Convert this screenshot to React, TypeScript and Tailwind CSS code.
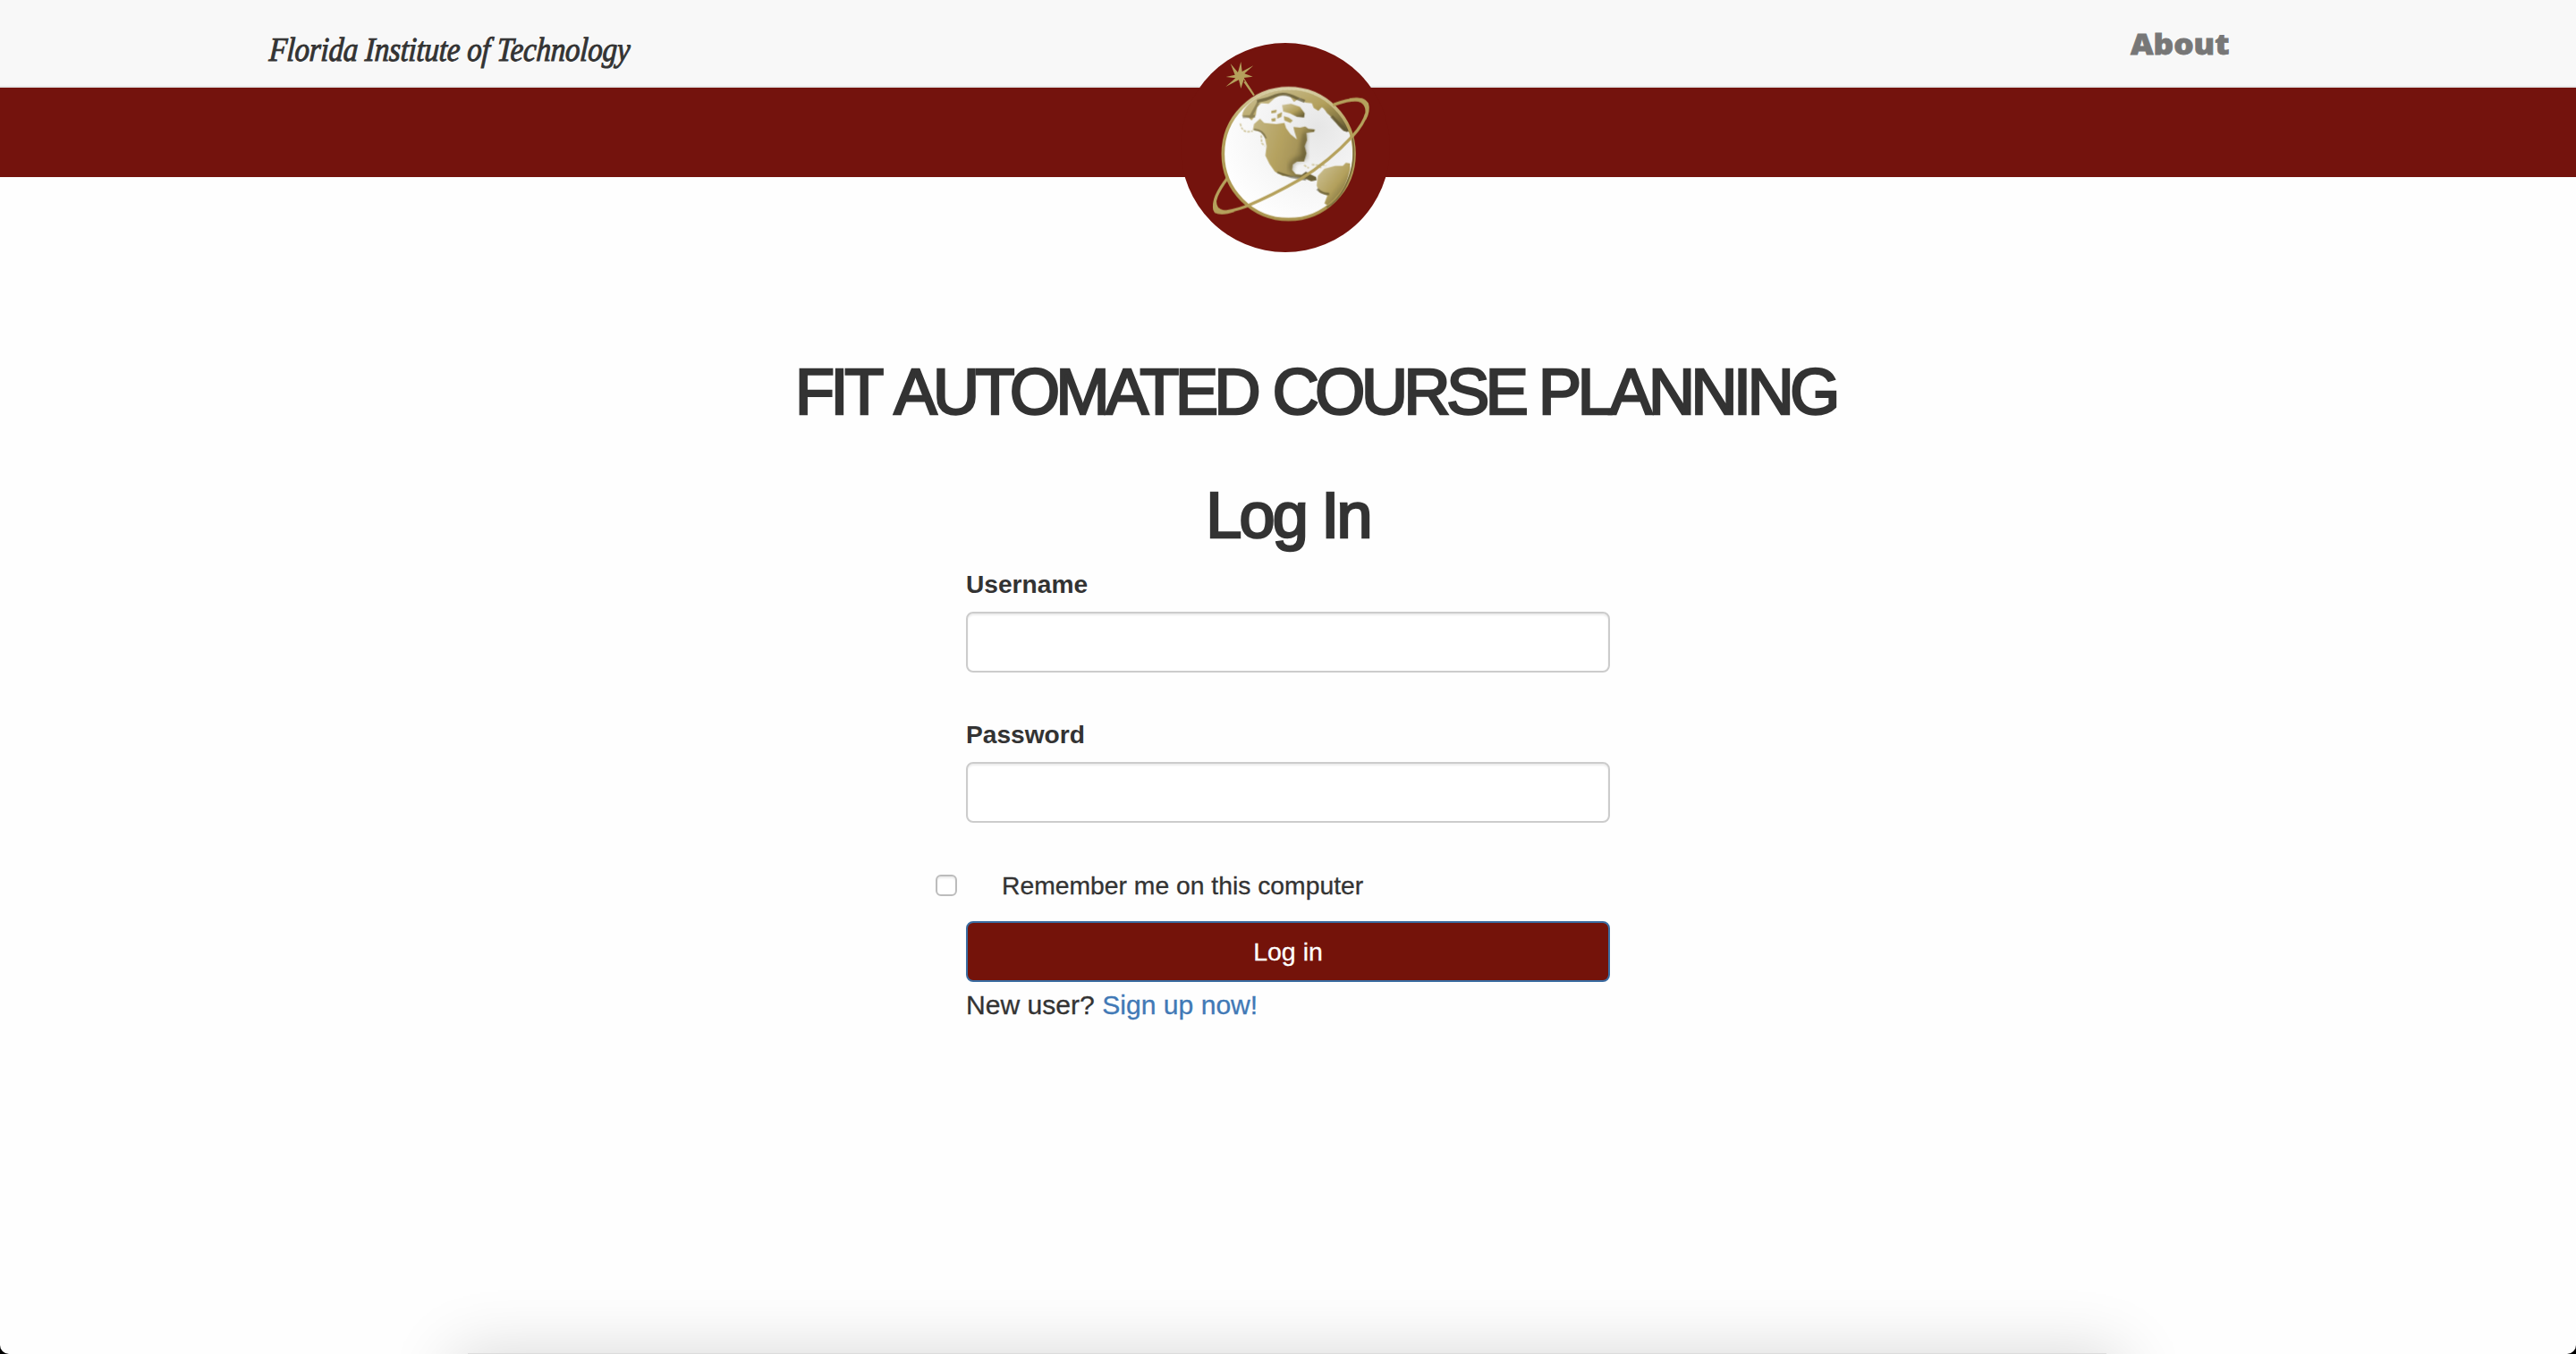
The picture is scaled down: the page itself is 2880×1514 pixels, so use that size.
function GlobeLogo() {
  return (
    <svg viewBox="0 0 780 780" className="block h-[260px] w-[260px]" aria-hidden="true">
      <defs>
        <radialGradient id="sea" cx="0.72" cy="0.3" r="0.8">
          <stop offset="0" stopColor="#e6e6e6" />
          <stop offset="0.45" stopColor="#f3f3f3" />
          <stop offset="1" stopColor="#ffffff" />
        </radialGradient>
        <linearGradient id="rim" x1="0" y1="0" x2="0" y2="1">
          <stop offset="0" stopColor="#d8cfa6" />
          <stop offset="0.3" stopColor="#b5a15c" />
          <stop offset="1" stopColor="#ab9650" />
        </linearGradient>
        <linearGradient id="landA" x1="0" y1="0" x2="1" y2="0.3">
          <stop offset="0" stopColor="#c3b684" />
          <stop offset="0.5" stopColor="#b5a260" />
          <stop offset="0.75" stopColor="#a8965a" />
          <stop offset="1" stopColor="#6b6138" />
        </linearGradient>
        <linearGradient id="landB" x1="0" y1="0" x2="1" y2="1">
          <stop offset="0" stopColor="#cfc59c" />
          <stop offset="0.55" stopColor="#b3a05c" />
          <stop offset="1" stopColor="#5b522e" />
        </linearGradient>
        <clipPath id="disc">
          <circle cx="392" cy="426" r="218" />
        </clipPath>
        <filter id="soft" x="-5%" y="-5%" width="110%" height="110%">
          <feGaussianBlur stdDeviation="2" />
        </filter>
        <filter id="shade" x="-30%" y="-30%" width="160%" height="160%">
          <feGaussianBlur stdDeviation="8" />
        </filter>
      </defs>
      <circle cx="381" cy="405" r="351" fill="#74130d" />
      <path
        d="M232 117l4 33 38-20-30 27 28 10-30 4 13 21 22 32-28-34-7-14-10 31-7-29-44 23 33-29-32-4 30-7-15-38 25 30z"
        fill="#b5a15c"
      />
      <circle cx="231" cy="163" r="14" fill="#b5a15c" />
      <path d="M244 184L276 230" stroke="#b5a15c" strokeWidth="6" />
      <circle cx="392" cy="426" r="220" fill="url(#sea)" />
      <g clipPath="url(#disc)">
        <g filter="url(#soft)">
          <path
            d="M236 300C238 270 270 245 310 222C350 200 440 200 485 222C545 252 590 300 602 352L578 350C560 338 545 310 526 294C516 286 515 276 503 270L492 282L476 272L470 256L448 254L430 238L410 252L396 232C378 222 355 232 340 244L325 258L300 256L286 270L282 296L268 314L258 304Z"
            fill="url(#landB)"
          />
          <path d="M238 302L280 300M262 306L282 270L290 254" fill="none" stroke="#5f5632" strokeWidth="9" opacity=".5" />
          <path d="M286 250Q320 244 350 230Q380 218 420 240L446 250" fill="none" stroke="#5f5632" strokeWidth="10" opacity=".75" />
          <path d="M240 268Q330 190 450 214Q540 240 592 330" fill="none" stroke="#e9e3c8" strokeWidth="4" strokeDasharray="10 5" />
          <path d="M536 300Q562 330 590 350" fill="none" stroke="#5f5632" strokeWidth="10" opacity=".7" />
          <path d="M370 262L400 258L430 268L446 290L444 304L420 302L396 290L374 284Z" fill="url(#landB)" />
          <path d="M334 282l18-4-2 10-16 2zM354 294l16-8-2 16-14 6zM334 308l14-2 0 10-12 2zM376 300l16 4 14 10-8 8-20-8z" fill="#b3a262" />
          <path
            d="M272 346L276 326L296 308L310 322L350 326L378 322L384 340L398 360L420 378L412 352L408 336L430 338L448 334L458 342L480 344L478 352L452 356L454 380L446 400L452 424L444 452L420 452L406 462L404 480L416 494L436 496L450 486L464 494L484 504L486 514L468 518L446 508L410 502L372 500L346 486L328 460L314 432L318 400L312 370L298 352Z"
            fill="url(#landA)"
          />
          <path d="M448 356L442 400L446 438L412 448L400 462L400 486" fill="none" stroke="#4f4728" strokeWidth="12" opacity=".55" filter="url(#shade)" />
          <path d="M354 488L400 503L450 512" fill="none" stroke="#4f4728" strokeWidth="7" opacity=".6" />
          <path d="M276 344Q306 346 316 374" fill="none" stroke="#4f4728" strokeWidth="6" opacity=".5" />
          <path
            d="M490 500L512 476L548 466L574 466L584 456L598 458L598 480L590 510L576 544L552 578L524 600L512 592L522 566L496 556L486 532Z"
            fill="url(#landB)"
          />
          <path d="M488 544Q505 562 528 560" fill="none" stroke="#4f4728" strokeWidth="8" opacity=".6" />
          <path d="M602 478Q588 556 528 598" fill="none" stroke="#f1edda" strokeWidth="5" />
          <path d="M230 324q4 24 22 28l20-2M300 364l2 26 10 10M444 464l16 10M470 462l20 2 12 10M504 462l14 4" fill="none" stroke="#cfc59c" strokeWidth="5" strokeDasharray="9 4" />
        </g>
      </g>
      <circle cx="392" cy="426" r="220" fill="none" stroke="url(#rim)" strokeWidth="11" />
      <path d="M606 370Q622 460 580 540Q556 584 520 606" fill="none" stroke="#7d7040" strokeWidth="5" />
      <path
        d="M541 262Q600 240 634 244Q662 250 654 288Q645 324 606 367Q530 450 430 512Q340 564 250 602Q190 624 156 620Q134 610 150 568Q162 540 186 509"
        fill="none"
        stroke="#b5a15c"
        strokeWidth="10"
      />
      <path d="M596 240Q640 230 660 256Q668 284 650 314Q656 266 634 254Q620 246 596 252z" fill="#b5a15c" />
      <path d="M146 580Q130 604 144 624Q168 636 212 620Q170 620 156 606Q150 598 150 584z" fill="#b5a15c" />
    </svg>
  );
}

function Field({ id, label, type }: { id: string; label: string; type: string }) {
  return (
    <div className="mb-[50px]">
      <label htmlFor={id} className="mb-[10px] block h-10 text-[28.15px] leading-10 font-bold">
        {label}
      </label>
      <input
        id={id}
        type={type}
        className="block h-[68px] w-full rounded-lg border-2 border-[#cccccc] bg-white px-6 text-[28px] shadow-[inset_0_2px_2px_rgba(0,0,0,0.075)]"
      />
    </div>
  );
}

export default function App() {
  return (
    <div className="h-[1514px] w-[2880px] bg-black font-['Liberation_Sans',Arial,sans-serif] text-[#333333]">
      <div className="relative h-full overflow-hidden rounded-b-[10px] bg-[#fefefe]">
        <header className="relative">
          <div className="flex h-[98px] items-start justify-between border-b-2 border-[#e7e7e7] bg-[#f8f8f8] pr-[388px] pl-[301px]">
            <span className="mt-[33px] origin-left scale-x-[0.865] -skew-x-[4deg] text-[38px] leading-[44px] tracking-[-0.2px] whitespace-nowrap text-[#333333] italic font-['Liberation_Serif',serif] [-webkit-text-stroke:1px_#333333]">
              Florida Institute of Technology
            </span>
            <a
              href="#"
              className="mt-[27px] origin-right scale-x-[1.1] text-[32px] leading-[44px] font-extrabold text-[#777777] font-['Open_Sans',sans-serif] [-webkit-text-stroke:0.8px_#777777]"
            >
              About
            </a>
          </div>
          <div className="h-[100px] bg-[#74130d]" />
          <div className="absolute top-[30px] left-[1310px]">
            <GlobeLogo />
          </div>
        </header>

        <main>
          <h1 className="mt-[200px] ml-[889px] h-20 text-[72px] leading-[80px] tracking-[-4.4px] whitespace-nowrap [-webkit-text-stroke:2.6px_#333333]">
            FIT<span className="ml-[4px]"> AUTOMATED</span>
            <span className="ml-[2px]"> COURSE PLANNING</span>
          </h1>
          <section className="mx-auto w-[720px]">
            <h2 className="mt-[58px] h-20 text-center text-[72px] leading-[80px] tracking-[-2.8px] [-webkit-text-stroke:2.6px_#333333]">
              Log In
            </h2>
            <form className="mt-[18px]">
              <Field id="username" label="Username" type="text" />
              <Field id="password" label="Password" type="password" />
              <label className="-ml-[34px] flex h-10 items-center gap-[50px] text-[28.3px] leading-10 [-webkit-text-stroke:0.3px_#333333]">
                <input
                  type="checkbox"
                  className="h-6 w-6 appearance-none rounded-[6px] border-2 border-[#bcbcbc] bg-white shadow-[inset_0_2px_2px_rgba(0,0,0,0.08)]"
                />
                Remember me on this computer
              </label>
              <button
                type="button"
                className="mt-5 block h-[68px] w-full rounded-lg border-2 border-[#3a6ca1] bg-[#74130a] text-center text-[28.5px] leading-10 text-white [-webkit-text-stroke:0.3px_#ffffff]"
              >
                Log in
              </button>
            </form>
            <p className="mt-[5px] text-[30.1px] leading-[42px] [-webkit-text-stroke:0.3px_currentColor]">
              New user?{" "}
              <a href="#" className="text-[#4179b6]">
                Sign up now!
              </a>
            </p>
          </section>
        </main>

        <div className="absolute top-[1514px] left-[508px] h-[300px] w-[1864px] shadow-[0_0_70px_rgba(0,0,0,0.16)]" />
        <div className="absolute top-[1513px] left-[523px] h-px w-[1832px] bg-[#dcdcdc]" />
      </div>
    </div>
  );
}
